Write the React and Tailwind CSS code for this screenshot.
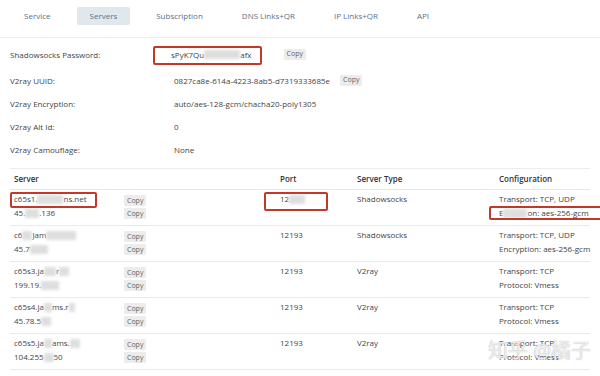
import React from 'react';

const Blur = ({ w }) => (
  <span className={`inline-block h-[9px] align-middle bg-[#dedede] blur-[1.5px] ${w}`} />
);

const CopyBtn = () => (
  <span className="inline-flex h-[11px] w-fit items-center rounded-[1px] bg-[#ececec] px-[3px] text-[7px] text-[#666]">Copy</span>
);

const tabs = ['Service', 'Servers', 'Subscription', 'DNS Links+QR', 'IP Links+QR', 'API'];

const servers = [
  {
    host: <>c65s1.<Blur w="w-[26px]" />ns.net</>,
    ip: <>45.<Blur w="w-[14px]" />.136</>,
    port: <>12<Blur w="w-[16px]" /></>,
    type: 'Shadowsocks',
    config: ['Transport: TCP, UDP', <>E<Blur w="w-[24px]" />on: aes-256-gcm</>],
  },
  {
    host: <>c6<Blur w="w-[10px]" />Jam<Blur w="w-[30px]" /></>,
    ip: <>45.7<Blur w="w-[18px]" /></>,
    port: '12193',
    type: 'Shadowsocks',
    config: ['Transport: TCP, UDP', 'Encryption: aes-256-gcm'],
  },
  {
    host: <>c65s3.ja<Blur w="w-[12px]" />r<Blur w="w-[10px]" /></>,
    ip: <>199.19.<Blur w="w-[18px]" /></>,
    port: '12193',
    type: 'V2ray',
    config: ['Transport: TCP', 'Protocol: Vmess'],
  },
  {
    host: <>c65s4.ja<Blur w="w-[8px]" />ms.r<Blur w="w-[6px]" /></>,
    ip: <>45.78.5<Blur w="w-[10px]" /></>,
    port: '12193',
    type: 'V2ray',
    config: ['Transport: TCP', 'Protocol: Vmess'],
  },
  {
    host: <>c65s5.ja<Blur w="w-[8px]" />ams.<Blur w="w-[10px]" /></>,
    ip: <>104.255<Blur w="w-[10px]" />50</>,
    port: '12193',
    type: 'V2ray',
    config: ['Transport: TCP', 'Protocol: Vmess'],
  },
];

const settings = [
  { label: 'Shadowsocks Password:', value: <>sPyK7Qu<Blur w="w-[36px]" />afx</>, copy: true, h: 'h-[29px]', vx: 'pl-[161px]', cx: 'ml-[32px]' },
  { label: 'V2ray UUID:', value: '0827ca8e-614a-4223-8ab5-d7319333685e', copy: true, h: 'h-[23px]', vx: 'pl-[164px]', cx: 'ml-[10px]' },
  { label: 'V2ray Encryption:', value: 'auto/aes-128-gcm/chacha20-poly1305', h: 'h-[23px]', vx: 'pl-[164px]' },
  { label: 'V2ray Alt Id:', value: '0', h: 'h-[23px]', vx: 'pl-[164px]' },
  { label: 'V2ray Camouflage:', value: 'None', h: 'h-[23px]', vx: 'pl-[164px]' },
];

const cols = 'grid-cols-[110px_156px_77px_142px_1fr]';

export default function App() {
  return (
    <div className="relative h-[376px] w-[600px] overflow-hidden bg-white text-[8px] text-[#444]" style={{ fontFamily: '"Open Sans", "Noto Sans CJK SC", sans-serif' }}>
      {/* Tabs */}
      <div className="flex h-[38px] items-start gap-[13px] border-b border-[#f0f0f0] pl-[11px] pt-[7px]">
        {tabs.map((t) => (
          <span
            key={t}
            className={`flex h-[18px] items-center rounded-[2px] px-[13px] text-[#58718a] ${t === 'Servers' ? 'bg-[#e0e7ed]' : ''}`}
          >
            {t}
          </span>
        ))}
      </div>

      {/* Settings */}
      <div className="mx-[10px] border-b border-[#ececec] pt-[2px] pb-[7px]">
        {settings.map((s) => (
          <div key={s.label} className={`flex items-center ${s.h}`}>
            <span className="w-0 whitespace-nowrap">{s.label}</span>
            <span className={`flex items-center whitespace-nowrap ${s.vx}`}>
              {s.value}
              {s.copy && <span className={`flex ${s.cx}`}><CopyBtn /></span>}
            </span>
          </div>
        ))}
      </div>

      {/* Servers table */}
      <div className="mx-[10px]">
        <div className={`grid h-[21px] ${cols} items-center border-b border-[#e6e6e6] pl-[4px] font-semibold text-[#333]`}>
          <span>Server</span>
          <span />
          <span>Port</span>
          <span>Server Type</span>
          <span>Configuration</span>
        </div>
        {servers.map((r, i) => (
          <div key={i} className={`grid h-[36px] ${cols} items-start border-b border-[#eaeaea] pl-[4px] pt-[2px] leading-[14px]`}>
            <div className="flex flex-col">
              <span className="flex items-center whitespace-nowrap">{r.host}</span>
              <span className="flex items-center whitespace-nowrap">{r.ip}</span>
            </div>
            <div className="flex flex-col items-start gap-[2px] pt-[3px]">
              <CopyBtn />
              <CopyBtn />
            </div>
            <span className="flex h-[14px] items-center">{r.port}</span>
            <span>{r.type}</span>
            <div className="flex flex-col whitespace-nowrap">
              <span>{r.config[0]}</span>
              <span className="flex items-center">{r.config[1]}</span>
            </div>
          </div>
        ))}
      </div>

      {/* Annotation boxes */}
      <div className="absolute left-[153px] top-[46px] h-[19px] w-[109px] rounded-[2px] border-2 border-[#c0392b]" />
      <div className="absolute left-[10px] top-[192px] h-[16px] w-[87px] rounded-[2px] border-2 border-[#c0392b]" />
      <div className="absolute left-[264px] top-[192px] h-[19px] w-[64px] rounded-[2px] border-2 border-[#c0392b]" />
      <div className="absolute left-[489px] top-[206px] h-[14px] w-[120px] rounded-[2px] border-2 border-[#c0392b]" />

      {/* Watermark */}
      <div className="absolute left-[488px] top-[336px] text-[20px] text-white/80 [text-shadow:0_0_1px_#999]">
        知乎 @橘子
      </div>
    </div>
  );
}
